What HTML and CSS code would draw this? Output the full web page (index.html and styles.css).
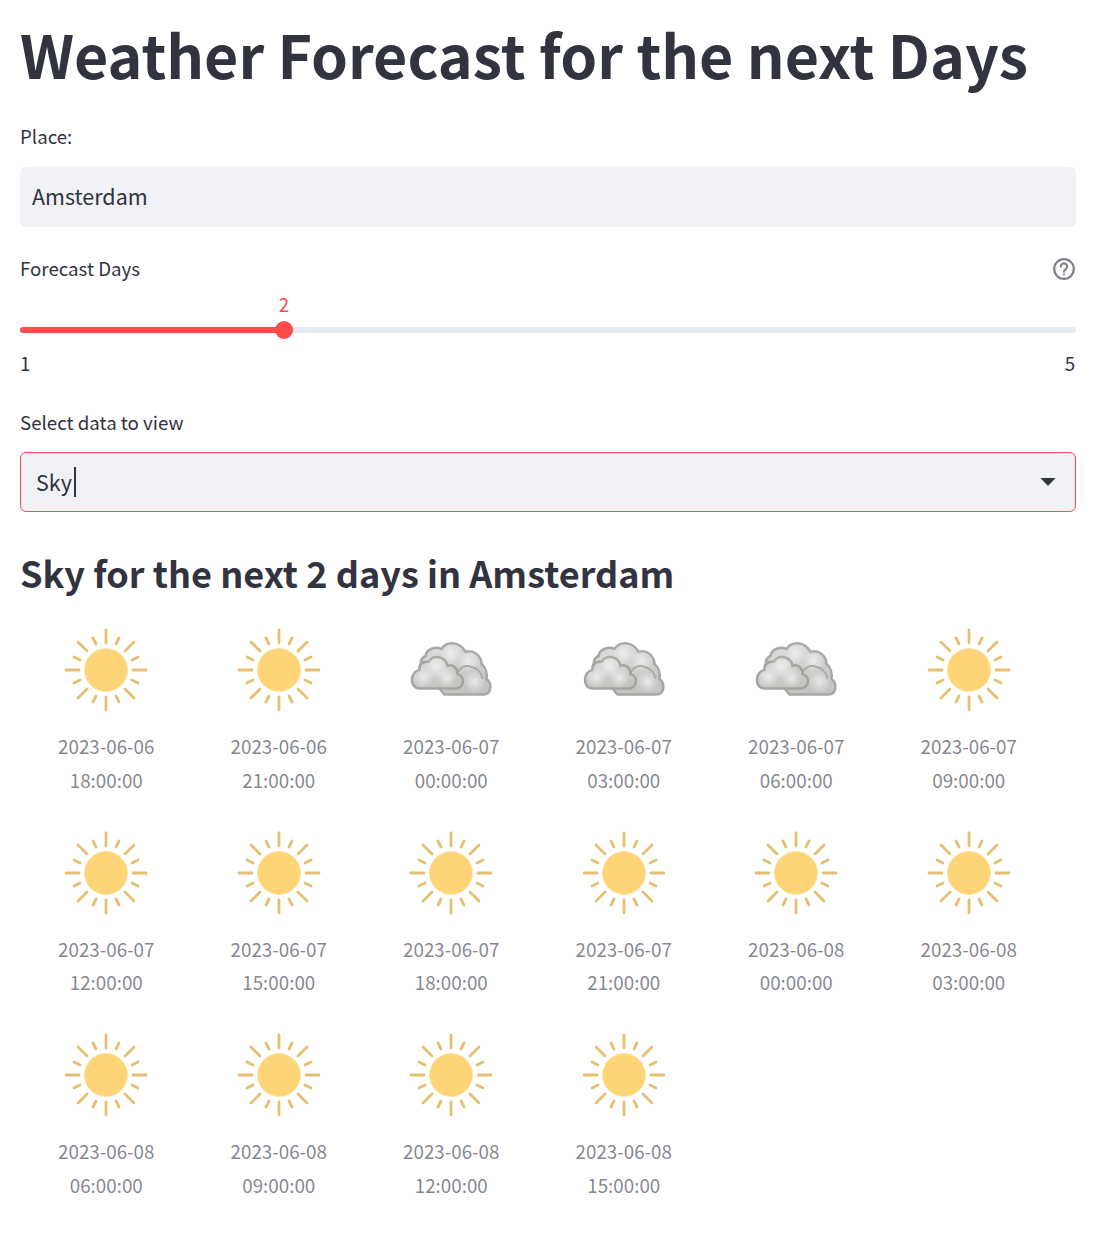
FILE: index.html
```html
<!DOCTYPE html>
<html lang="en">
<head>
  <meta charset="UTF-8" />
  <title>Weather Forecast</title>
  <link rel="stylesheet" href="styles.css">
</head>
<body>
  <svg class="defs" width="0" height="0">
    <defs>
      <linearGradient id="cloudFill" x1="0" y1="0" x2="0.4" y2="1">
        <stop offset="0" stop-color="#dededd" />
        <stop offset="1" stop-color="#c4c5c2" />
      </linearGradient>
      <radialGradient id="glow">
        <stop offset="0" stop-color="#fff" stop-opacity=".6" />
        <stop offset="1" stop-color="#fff" stop-opacity="0" />
      </radialGradient>
      <g id="sun">
        <g stroke="#e6c072" stroke-width="2.8" stroke-linecap="round">
          <path d="M45 5V18M45 72V85M5 45H18M72 45H85" />
          <path d="M17 17L26 26M64 26L73 17M17 73L26 64M64 64L73 73" />
          <path d="M32 13L35 19M58 13L55 19M13 32L19 35M77 32L71 35M13 58L19 55M77 58L71 55M32 77L35 71M58 77L55 71" />
        </g>
        <circle cx="45" cy="45" r="21.5" fill="#fdd576" stroke="#fde3a4" stroke-width="1" />
      </g>
      <g id="clouds">
        <path d="M44 64.5H83C91 64.5 92 53 86 49C87 43 85 37 81 34C81 26 73 19 65 22C60 12 47 10 41 19C35 16 26 19 25 26C20 28 19 34 22 38Z" fill="url(#cloudFill)" stroke="#a8a9a6" stroke-width="2.5" />
        <circle cx="50" cy="24" r="11" fill="url(#glow)" />
        <circle cx="68" cy="31" r="11" fill="url(#glow)" />
        <circle cx="74" cy="52" r="11" fill="url(#glow)" />
        <path d="M57 44C59 37 66 34 71 37C77 38 81 43 82 49" fill="none" stroke="#a8a9a6" stroke-width="1.8" />
        <path d="M19 58.5H55C64 58.5 65 46 57 44C57 37 51 34 47 36C45 26 33 24 28 32C22 31 18 35 19 40C10 41 8 58 19 58.5Z" fill="url(#cloudFill)" stroke="#a3a5a1" stroke-width="2.5" />
        <circle cx="36" cy="37" r="12" fill="url(#glow)" />
        <circle cx="23" cy="47" r="10" fill="url(#glow)" />
        <circle cx="46" cy="48" r="10" fill="url(#glow)" />
      </g>
    </defs>
  </svg>

  <main class="app">
    <h1>Weather Forecast for the next Days</h1>

    <div class="field field-place">
      <label class="field-label">Place:</label>
      <div class="text-input">Amsterdam</div>
    </div>

    <div class="field field-slider">
      <div class="label-row">
        <label class="field-label">Forecast Days</label>
        <svg class="help-icon" width="24" height="24" viewBox="0 -1 24 24" fill="none" stroke="#808289" stroke-width="2.2">
          <circle cx="12" cy="12" r="9.8" />
          <path d="M8.8 9.6a3.2 3.2 0 1 1 5 2.6c-1.1.8-1.8 1.3-1.8 2.6" stroke-linecap="round" />
          <circle cx="12" cy="17.4" r=".6" fill="#808289" stroke-width="1" />
        </svg>
      </div>
      <div class="slider">
        <div class="slider-fill"></div>
        <div class="slider-thumb"><span class="slider-value">2</span></div>
      </div>
      <div class="slider-range"><span>1</span><span>5</span></div>
    </div>

    <div class="field field-select">
      <label class="field-label">Select data to view</label>
      <div class="select-box">
        <span class="select-value">Sky</span>
        <svg class="select-arrow" width="16" height="8" viewBox="0 0 16 8"><path d="M0.5 0H15.5L8 8Z" fill="#31333f" /></svg>
      </div>
    </div>

    <h2>Sky for the next 2 days in Amsterdam</h2>

    <div class="forecast">
      <figure class="day"><svg class="icon" viewBox="0 0 90 90"><use href="#sun" /></svg><figcaption>2023-06-06<br>18:00:00</figcaption></figure>
      <figure class="day"><svg class="icon" viewBox="0 0 90 90"><use href="#sun" /></svg><figcaption>2023-06-06<br>21:00:00</figcaption></figure>
      <figure class="day"><svg class="icon" viewBox="5.5 -5 90 90"><use href="#clouds" /></svg><figcaption>2023-06-07<br>00:00:00</figcaption></figure>
      <figure class="day"><svg class="icon" viewBox="5.5 -5 90 90"><use href="#clouds" /></svg><figcaption>2023-06-07<br>03:00:00</figcaption></figure>
      <figure class="day"><svg class="icon" viewBox="5.5 -5 90 90"><use href="#clouds" /></svg><figcaption>2023-06-07<br>06:00:00</figcaption></figure>
      <figure class="day"><svg class="icon" viewBox="0 0 90 90"><use href="#sun" /></svg><figcaption>2023-06-07<br>09:00:00</figcaption></figure>
      <figure class="day"><svg class="icon" viewBox="0 0 90 90"><use href="#sun" /></svg><figcaption>2023-06-07<br>12:00:00</figcaption></figure>
      <figure class="day"><svg class="icon" viewBox="0 0 90 90"><use href="#sun" /></svg><figcaption>2023-06-07<br>15:00:00</figcaption></figure>
      <figure class="day"><svg class="icon" viewBox="0 0 90 90"><use href="#sun" /></svg><figcaption>2023-06-07<br>18:00:00</figcaption></figure>
      <figure class="day"><svg class="icon" viewBox="0 0 90 90"><use href="#sun" /></svg><figcaption>2023-06-07<br>21:00:00</figcaption></figure>
      <figure class="day"><svg class="icon" viewBox="0 0 90 90"><use href="#sun" /></svg><figcaption>2023-06-08<br>00:00:00</figcaption></figure>
      <figure class="day"><svg class="icon" viewBox="0 0 90 90"><use href="#sun" /></svg><figcaption>2023-06-08<br>03:00:00</figcaption></figure>
      <figure class="day"><svg class="icon" viewBox="0 0 90 90"><use href="#sun" /></svg><figcaption>2023-06-08<br>06:00:00</figcaption></figure>
      <figure class="day"><svg class="icon" viewBox="0 0 90 90"><use href="#sun" /></svg><figcaption>2023-06-08<br>09:00:00</figcaption></figure>
      <figure class="day"><svg class="icon" viewBox="0 0 90 90"><use href="#sun" /></svg><figcaption>2023-06-08<br>12:00:00</figcaption></figure>
      <figure class="day"><svg class="icon" viewBox="0 0 90 90"><use href="#sun" /></svg><figcaption>2023-06-08<br>15:00:00</figcaption></figure>
    </div>
  </main>
</body>
</html>
```

FILE: styles.css
```css
body {
  margin: 0;
  background-color: white;
  color: #31333f;
  font-family: "Noto Sans CJK SC", "Noto Sans", sans-serif;
}
.defs {
  display: block;
  height: 0;
}
.app {
  padding: 0 32px 0 20px;
}
h1 {
  margin: 0;
  padding-top: 13px;
  height: 85px;
  font-size: 59.1px;
  line-height: 80px;
  font-weight: 700;
  white-space: nowrap;
}
h2 {
  margin: 36.5px 0 0;
  height: 46px;
  font-size: 36.1px;
  line-height: 46px;
  font-weight: 600;
}
.field-label {
  display: block;
  font-size: 18.7px;
  line-height: 30px;
}
.field-place {
  padding-top: 23px;
}
.text-input {
  margin-top: 16px;
  height: 60px;
  padding: 0 12px;
  background-color: #f0f2f6;
  border-radius: 6px;
  font-size: 21.5px;
  line-height: 58px;
}
.field-slider {
  padding-top: 26px;
}
.label-row {
  display: flex;
  justify-content: space-between;
  align-items: center;
}
.slider {
  position: relative;
  margin-top: 44px;
  height: 6px;
  background-color: #e6eaf1;
  border-radius: 3px;
}
.slider-fill {
  width: 25%;
  height: 100%;
  background-color: #ff4b4b;
  border-radius: 3px;
}
.slider-thumb {
  position: absolute;
  left: 25%;
  top: -6px;
  width: 18px;
  height: 18px;
  margin-left: -9px;
  background-color: #ff4b4b;
  border-radius: 50%;
}
.slider-value {
  position: absolute;
  left: 0;
  right: 0;
  top: -32px;
  color: #ff4b4b;
  font-size: 18.7px;
  line-height: 30px;
  text-align: center;
}
.slider-range {
  display: flex;
  justify-content: space-between;
  margin-top: 15px;
  padding: 0 1px 0 0;
  font-size: 18.7px;
  line-height: 30px;
}
.field-select {
  padding-top: 29px;
}
.select-box {
  display: flex;
  align-items: center;
  justify-content: space-between;
  box-sizing: border-box;
  margin-top: 15px;
  height: 60px;
  padding: 0 19px 0 15px;
  background-color: #f0f2f6;
  border: 1.5px solid #ff4b4b;
  border-radius: 6px;
  font-size: 21.5px;
}
.select-value {
  padding-right: 2px;
  border-right: 2px solid #31333f;
  line-height: 30px;
}
.forecast {
  display: grid;
  grid-template-columns: repeat(6, 172.5px);
  margin-top: 30.5px;
}
.day {
  margin: 0;
  height: 202.5px;
  text-align: center;
}
.icon {
  display: block;
  width: 90px;
  height: 90px;
  margin: 0 auto;
  filter: blur(0.5px);
}
.day figcaption {
  margin-top: 14px;
  color: rgba(49, 51, 63, 0.6);
  font-size: 18.8px;
  line-height: 33.5px;
}
```
